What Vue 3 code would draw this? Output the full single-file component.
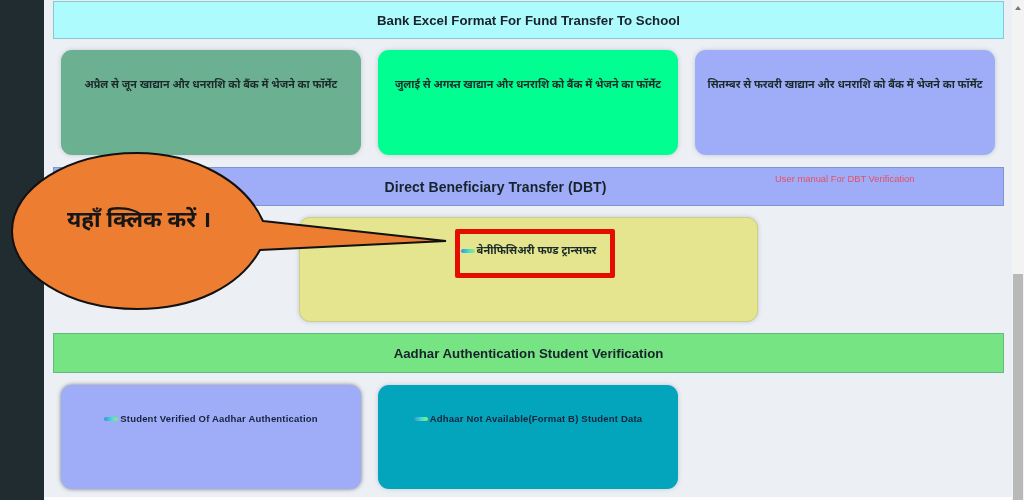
<script setup>
const bankCards = [
  { text: 'अप्रैल से जून खाद्यान और धनराशि को बैंक में भेजने का फॉर्मेट', tone: 'sage' },
  { text: 'जुलाई से अगस्त खाद्यान और धनराशि को बैंक में भेजने का फॉर्मेट', tone: 'mint' },
  { text: 'सितम्बर से फरवरी खाद्यान और धनराशि को बैंक में भेजने का फॉर्मेट', tone: 'periwinkle' }
]
const aadharCards = [
  { text: 'Student Verified Of Aadhar Authentication', tone: 'periwinkle raised' },
  { text: 'Adhaar Not Available(Format B) Student Data', tone: 'teal' }
]
</script>

<template>
  <div class="page">
    <aside class="sidebar"></aside>
    <main class="content">
      <section class="band cyan"><h2>Bank Excel Format For Fund Transfer To School</h2></section>
      <div class="cards">
        <div v-for="c in bankCards" :key="c.text" class="card" :class="c.tone">
          <span class="hindi">{{ c.text }}</span>
        </div>
      </div>

      <section class="band blue">
        <h2>Direct Beneficiary Transfer (DBT)</h2>
        <a class="manual">User manual For DBT Verification</a>
      </section>
      <div class="single">
        <div class="card wide yellow">
          <span class="hindi dbt"><i class="broken"></i>बेनीफिसिअरी फण्ड ट्रान्सफर</span>
          <div class="highlight"></div>
        </div>
      </div>

      <section class="band green"><h2>Aadhar Authentication Student Verification</h2></section>
      <div class="cards last">
        <div v-for="c in aadharCards" :key="c.text" class="card" :class="c.tone">
          <span class="latin"><i class="broken"></i>{{ c.text }}</span>
        </div>
      </div>
    </main>
    <div class="scrollbar">
      <div class="track-top"><svg width="8" height="6" viewBox="0 0 8 6"><path d="M4 1 L7 5 L1 5 Z" fill="#777" /></svg></div>
      <div class="thumb"></div>
    </div>

    <div class="callout">
      <svg width="450" height="170" viewBox="0 0 450 170">
        <path
          d="M263 70 L446 90 L260 99 C240 135 195 158 137 158 C68 158 12 123 12 80 C12 37 68 2 137 2 C195 2 245 30 263 70 Z"
          fill="#ed7d31" stroke="#111" stroke-width="2" stroke-linejoin="miter"
        />
      </svg>
      <span class="callout-text">यहाँ क्लिक करें ।</span>
    </div>
  </div>
</template>

<style>
html, body { margin: 0; padding: 0; overflow: hidden; }
</style>

<style scoped>
.page {
  position: relative;
  display: flex;
  width: 1024px;
  height: 500px;
  overflow: hidden;
  background: #ecf0f5;
  font-family: "Liberation Sans", Arial, "Noto Sans", sans-serif;
  filter: blur(0.35px);
}
.sidebar { width: 44px; flex: none; background: #212c31; }
.content {
  flex: 1;
  min-width: 0;
  padding: 1px 8px 3px 9px;
  display: flex;
  flex-direction: column;
  box-shadow: inset 0 -3px 0 #fbfcfd;
}
.band {
  position: relative;
  height: 38px;
  flex: none;
  display: flex;
  align-items: center;
  justify-content: center;
  box-sizing: border-box;
  border: 1px solid rgba(60, 110, 130, 0.35);
}
.band h2 { margin: 0; font-size: 13.25px; font-weight: 700; color: #18222c; }
.cyan { background: #aefbfd; }
.blue { background: #9fadf9; height: 39px; padding-right: 66px; }
.blue h2 { font-size: 14px; letter-spacing: 0.05px; }
.green { background: #76e483; height: 40px; }
.manual {
  position: absolute;
  left: 721px;
  top: 5px;
  font-size: 9.4px;
  color: #e64f62;
}
.cards {
  display: flex;
  gap: 17px;
  padding: 11px 8px 12px;
}
.cards.last { padding: 12px 8px 0; }
.cards.last .card { height: 104px; padding-top: 23px; }
.single {
  display: flex;
  justify-content: center;
  padding: 11px 0;
}
.card {
  position: relative;
  width: 300px;
  height: 105px;
  box-sizing: border-box;
  border-radius: 11px;
  padding-top: 24px;
  text-align: center;
  box-shadow: 0 0 4px rgba(90, 100, 120, 0.3);
}
.wide { width: 459px; padding-top: 22px; }
.sage { background: #6bb091; }
.mint { background: #00ff90; }
.periwinkle { background: #9fadf9; }
.teal { background: #03a5bd; }
.yellow { background: #e4e58e; border: 1px solid #cdcf83; }
.raised { box-shadow: 0 0 4px rgba(40, 40, 50, 0.6); }
.hindi {
  font-family: "Noto Sans Devanagari", "Lohit Devanagari", "FreeSerif", "Noto Sans", serif;
  font-size: 10.75px;
  font-weight: 700;
  color: #1b2a2a;
  white-space: nowrap;
}
.dbt { font-size: 11px; }
.latin {
  font-size: 9.5px;
  font-weight: 700;
  color: #14233a;
  white-space: nowrap;
  letter-spacing: 0.2px;
}
.broken {
  display: inline-block;
  width: 14px;
  height: 4px;
  margin-right: 2px;
  vertical-align: 1px;
  background: linear-gradient(90deg, #3f8fe0, #45e6c8 60%, #9be86a);
  border-radius: 2px;
}
.highlight {
  position: absolute;
  left: 155px;
  top: 11px;
  width: 160px;
  height: 49px;
  box-sizing: border-box;
  border: 5px solid #e50c00;
  border-radius: 2px;
}
.scrollbar {
  width: 12px;
  flex: none;
  display: flex;
  flex-direction: column;
  background: #f3f3f3;
}
.track-top {
  height: 274px;
  flex: none;
  display: flex;
  justify-content: center;
  align-items: flex-start;
  padding-top: 5px;
  box-sizing: border-box;
}
.thumb { flex: 1; margin: 0 1px; background: #b9b9b9; }
.callout {
  position: absolute;
  left: 0;
  top: 151px;
  width: 450px;
  height: 170px;
}
.callout-text {
  position: absolute;
  left: 67px;
  top: 56px;
  font-family: "Noto Sans Devanagari", "Lohit Devanagari", "FreeSerif", "Noto Sans", serif;
  font-size: 22.5px;
  font-weight: 700;
  color: #161616;
  white-space: nowrap;
}
</style>
